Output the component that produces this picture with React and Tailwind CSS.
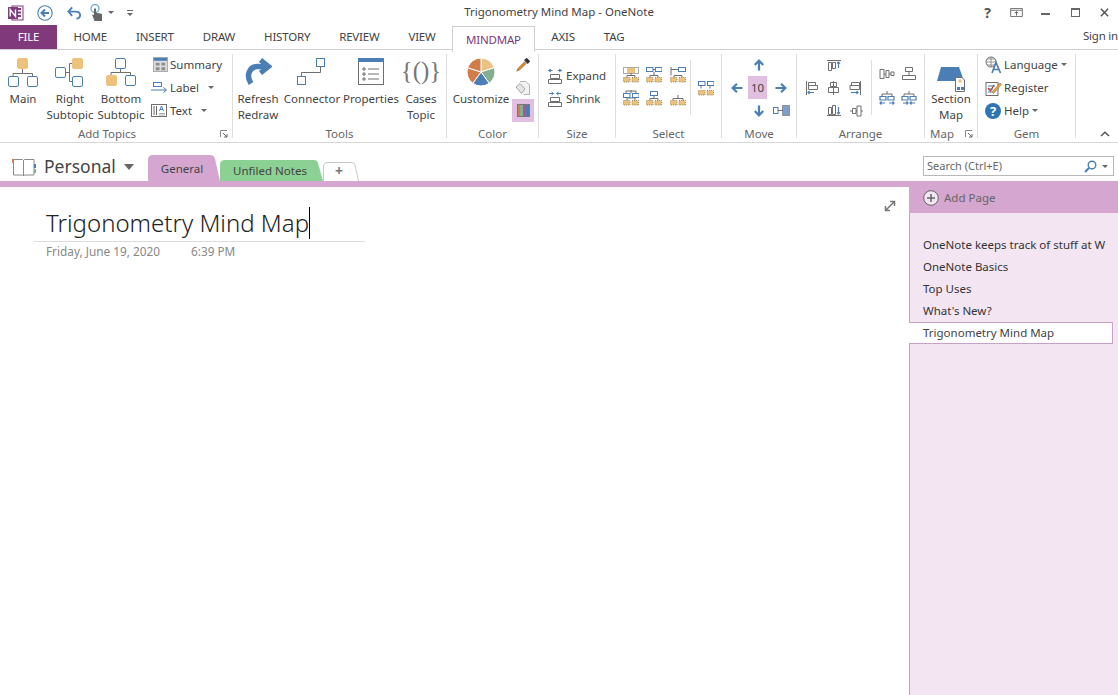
import React from "react";

const blue = "#4a7eb5";
const orange = "#ecc27c";
const gray = "#6f6f6f";

function polar(r, deg) {
  const a = (deg * Math.PI) / 180;
  return `${(15 + r * Math.cos(a)).toFixed(2)} ${(15 + r * Math.sin(a)).toFixed(2)}`;
}

function Pie() {
  const slices = [
    [-90, -18, "#e9c384"],
    [-18, 54, "#86ae92"],
    [54, 126, "#4a7eb5"],
    [126, 198, "#d27d48"],
    [198, 270, "#d27d48"],
  ];
  return (
    <svg width="30" height="30" viewBox="0 0 30 30">
      {slices.map((s) => (
        <path
          key={s[0]}
          d={`M15 15 L${polar(14, s[0])} A14 14 0 0 1 ${polar(14, s[1])} Z`}
          fill={s[2]}
          stroke="#fff"
          strokeWidth="1"
        />
      ))}
    </svg>
  );
}

// big topic icons: o = filled orange, b = blue outline
function TopicIcon({ boxes, line }) {
  return (
    <svg width="32" height="30" viewBox="0 0 32 30">
      <path d={line} fill="none" stroke={gray} strokeWidth="1" />
      {boxes.map((b, i) => (
        <rect
          key={i}
          x={b[0] + 0.5}
          y={b[1] + 0.5}
          width="10"
          height="10"
          rx="1.5"
          fill={b[2] === "o" ? orange : "#fff"}
          stroke={b[2] === "o" ? orange : blue}
          strokeWidth="1"
        />
      ))}
    </svg>
  );
}

// small org chart icons in the Select group
function OrgIcon({ top, line, bottom, frame }) {
  return (
    <svg width="16" height="16" viewBox="0 0 16 16">
      {frame && <rect x="0.5" y="0.5" width="15" height="6" fill="none" stroke="#555" strokeWidth="1" strokeDasharray="1 1" />}
      <path d={line} fill="none" stroke={gray} strokeWidth="1" />
      {top.map((b, i) => (
        <rect key={i} x={b[0] + 0.5} y={b[1] + 0.5} width={b[2]} height="4" fill={b[3] ? orange : "#fff"} stroke={b[3] ? orange : blue} strokeWidth="1" />
      ))}
      {bottom.map((x, i) => (
        <rect key={i} x={x + 0.5} y="10.5" width="6.5" height="4.5" fill={orange} stroke="#a08c5c" strokeWidth="1" strokeDasharray="1 1" />
      ))}
    </svg>
  );
}

function Arrow({ dir }) {
  const rot = { up: 0, right: 90, down: 180, left: 270 }[dir];
  return (
    <svg width="12" height="12" viewBox="0 0 12 12" style={{ transform: `rotate(${rot}deg)` }}>
      <path d="M6 11.5V2M1.8 6 6 1.6 10.2 6" fill="none" stroke={blue} strokeWidth="2.2" />
    </svg>
  );
}

function ArrangeIcon({ d, blueD }) {
  return (
    <svg width="16" height="16" viewBox="0 0 16 16">
      <path d={d} fill="none" stroke={gray} strokeWidth="1" />
      {blueD && <path d={blueD} fill="none" stroke={blue} strokeWidth="1.2" />}
    </svg>
  );
}

function Launcher() {
  return (
    <svg width="8" height="8" viewBox="0 0 8 8" className="absolute right-[4px] top-[4px]">
      <path d="M0.5 7V0.5H7" fill="none" stroke="#8a8a8a" />
      <path d="M3 3 7 7M7 4V7H4" fill="none" stroke="#666" />
    </svg>
  );
}

function Caret({ className }) {
  return <span className={`inline-block w-0 h-0 border-x-[3px] border-x-transparent border-t-[3px] border-t-[#666] ${className || ""}`} />;
}

function Sep() {
  return <div className="w-px h-[84px] mt-[4px] bg-[#dedede] shrink-0" />;
}

function Group({ width, label, launcher, children }) {
  return (
    <div className={`${width} shrink-0 flex flex-col h-full relative`}>
      <div className="flex-1 flex min-h-0">{children}</div>
      <div className={`h-[16px] leading-[16px] text-center text-[#666] relative ${launcher ? "pr-[18px]" : ""}`}>
        {label}
        {launcher && <Launcher />}
      </div>
    </div>
  );
}

function Large({ width, icon, lines }) {
  return (
    <div className={`${width} shrink-0 flex flex-col items-center pt-[7px]`}>
      <div className="h-[34px] flex items-start justify-center">{icon}</div>
      {lines.map((l) => (
        <div key={l} className="leading-[16px] whitespace-nowrap">{l}</div>
      ))}
    </div>
  );
}

function Small({ icon, label, caret }) {
  return (
    <div className="h-[23px] flex items-center whitespace-nowrap">
      {icon}
      <span>{label}</span>
      {caret}
    </div>
  );
}

function Cell({ children }) {
  return <div className="w-[22px] h-[23px] flex items-center justify-center">{children}</div>;
}

function Tab({ label, active }) {
  if (active) {
    return (
      <div className="h-[26px] -mb-px ml-[2px] mr-[2px] px-[13px] flex items-center border border-b-0 border-[#d0d0d0] bg-white text-[#80397b] mt-px">
        {label}
      </div>
    );
  }
  return <div className="px-[14.5px] flex items-center">{label}</div>;
}

function SectionTab({ w, h, fill, stroke, d, children, className }) {
  return (
    <div className={`relative ${w} ${h} flex items-center justify-center ${className || ""}`}>
      <svg className="absolute inset-0" width="100%" height="100%" preserveAspectRatio="none" viewBox={`0 0 ${parseInt(w.slice(3))} ${parseInt(h.slice(3))}`}>
        <path d={d} fill={fill} stroke={stroke} />
      </svg>
      <span className="relative">{children}</span>
    </div>
  );
}

export default function App() {
  const pages = ["OneNote keeps track of stuff at W", "OneNote Basics", "Top Uses", "What's New?"];
  return (
    <div className="w-[1118px] h-[695px] overflow-hidden bg-white flex flex-col text-[11.5px] text-[#444] font-['Noto_Sans',sans-serif]">
      {/* title bar */}
      <div className="h-[25px] shrink-0 flex items-center relative">
        <div className="flex items-center pl-[8px] gap-[13px]">
          <svg width="16" height="16" viewBox="0 0 16 16">
            <rect x="4" y="1" width="11" height="14" fill="#fff" stroke="#80397b" />
            <path d="M10 3h3v2h-3zM10 6.5h3v2h-3zM10 10h3v2h-3z" fill="#80397b" />
            <rect x="0" y="2" width="10" height="12" fill="#80397b" />
            <path d="M2.2 11.5V4.5L7.5 11.5V4.5" fill="none" stroke="#fff" strokeWidth="1.4" />
          </svg>
          <svg width="16" height="16" viewBox="0 0 16 16">
            <circle cx="8" cy="8" r="7.2" fill="none" stroke={blue} strokeWidth="1.1" />
            <path d="M12 8H5M8 4.5 4.5 8 8 11.5" fill="none" stroke={blue} strokeWidth="2" />
          </svg>
          <div className="flex items-center ml-px">
            <svg width="15" height="14" viewBox="0 0 16 14" className="mr-[8px]">
              <path d="M3 5.5H9.5C12.5 5.5 14 7.5 14 9.5S12 13 10 13" fill="none" stroke={blue} strokeWidth="2" />
              <path d="M5.5 1 1.5 5.5 5.5 10" fill="none" stroke={blue} strokeWidth="2" />
            </svg>
            <svg width="14" height="18" viewBox="0 0 14 18" className="mr-[4px]">
              <circle cx="5" cy="4.5" r="4" fill="none" stroke="#6fb3d2" strokeWidth="1.4" />
              <path d="M4 4.5V11L2 10.5 4.5 17H12V10L6 8.5V4.5Z" fill="#666" />
            </svg>
            <Caret className="border-t-[#444]" />
            <div className="ml-[13px] flex flex-col items-center gap-[2px]">
              <div className="w-[6px] h-px bg-[#666]" />
              <Caret className="border-t-[#666]" />
            </div>
          </div>
        </div>
        <div className="absolute inset-x-0 top-[4px] text-center leading-[16px] pointer-events-none">Trigonometry Mind Map - OneNote</div>
        <div className="ml-auto flex items-center text-[#555]">
          <span className="w-[7px] flex justify-center font-bold text-[14px] leading-none mr-[19px]">?</span>
          <svg width="13" height="9" viewBox="0 0 14 10" className="mr-[18px]">
            <path d="M.5.5h13v9H.5zM.5 2.5h13" fill="none" stroke="#666" />
            <path d="M7 8.5V4M5 6 7 4 9 6" fill="none" stroke="#555" />
          </svg>
          <div className="w-[9px] h-[2px] bg-[#666] mr-[21px] mt-[3px]" />
          <div className="w-[9px] h-[9px] border border-t-2 border-[#666] mr-[20px]" />
          <svg width="9" height="9" viewBox="0 0 11 11" className="mr-[9px]">
            <path d="M1 1 10 10M10 1 1 10" stroke="#555" strokeWidth="1.8" />
          </svg>
        </div>
      </div>

      {/* tabs */}
      <div className="h-[25px] shrink-0 flex items-stretch border-b border-[#d0d0d0] tracking-[-0.2px]">
        <div className="w-[57px] mr-[2px] bg-[#80397b] text-white flex items-center justify-center">FILE</div>
        <Tab label="HOME" />
        <Tab label="INSERT" />
        <Tab label="DRAW" />
        <Tab label="HISTORY" />
        <Tab label="REVIEW" />
        <Tab label="VIEW" />
        <Tab label="MINDMAP" active />
        <Tab label="AXIS" />
        <Tab label="TAG" />
        <div className="ml-auto flex items-center whitespace-nowrap pb-[3px]">Sign in</div>
      </div>

      {/* ribbon */}
      <div className="h-[93px] shrink-0 flex border-b border-[#d6d6d6]">
        <Group width="w-[232px]" label="Add Topics" launcher>
          <Large width="w-[46px]" lines={["Main"]} icon={<TopicIcon boxes={[[10, 1, "o"], [1, 19, "b"], [20, 19, "b"]]} line="M15.5 12V16M6 19V16.5H25.5V19" />} />
          <Large width="w-[48px]" lines={["Right", "Subtopic"]} icon={<TopicIcon boxes={[[1, 10, "b"], [18, 1, "o"], [18, 19, "b"]]} line="M12 15.5H15M18 6.5H15.5V24.5H18" />} />
          <Large width="w-[54px]" lines={["Bottom", "Subtopic"]} icon={<TopicIcon boxes={[[10, 1, "b"], [1, 18, "o"], [20, 18, "b"]]} line="M15.5 12V15.5M6 18V15.5H25.5V18" />} />
          <div className="pl-[3px] pt-[3px] flex flex-col">
            <Small label="Summary" icon={
              <svg width="15" height="15" viewBox="0 0 16 16" className="ml-[2px] mr-[2px]">
                <rect x=".5" y=".5" width="15" height="15" fill="#dcdcdc" stroke="#a8a8a8" />
                <rect x="1" y="1" width="14" height="3" fill={blue} />
                <path d="M3 6h4v3H3zM9 6h4v3H9zM3 11h4v3H3zM9 11h4v3H9z" fill="#8c8c8c" />
              </svg>} />
            <Small label="Label" caret={<Caret className="ml-[9px]" />} icon={
              <svg width="17" height="12" viewBox="0 0 17 12" className="mr-[2px]">
                <rect x="2.5" y=".5" width="8" height="4" fill="#fff" stroke={blue} />
                <path d="M0 8H15M12.5 5.5 15.5 8 12.5 10.5" fill="none" stroke={blue} />
              </svg>} />
            <Small label="Text" caret={<Caret className="ml-[9px]" />} icon={
              <svg width="16" height="13" viewBox="0 0 16 13" className="mr-[3px]">
                <rect x=".5" y=".5" width="15" height="12" fill="#fff" stroke={gray} />
                <path d="M3 2v9M5.5 2v9" stroke={gray} />
                <path d="M8.5 7 10.5 2 12.5 7M9.2 5.5h2.6" fill="none" stroke={blue} />
                <path d="M8 9.5h6M8 11h6" stroke="#aaa" />
              </svg>} />
          </div>
        </Group>
        <Sep />
        <Group width="w-[213px]" label="Tools">
          <Large width="w-[50px]" lines={["Refresh", "Redraw"]} icon={
            <svg width="27" height="27" viewBox="0 0 27 27" className="mt-[1px]">
              <path d="M6 25.5C1 18 4 9 12 8.5H22" fill="none" stroke={blue} strokeWidth="5.5" />
              <path d="M15.5 2 23.5 8.5 15.5 15" fill="none" stroke={blue} strokeWidth="5" />
            </svg>} />
          <Large width="w-[58px]" lines={["Connector"]} icon={
            <svg width="30" height="28" viewBox="0 0 30 28" className="mt-[1px]">
              <rect x=".5" y="18.5" width="8" height="8" fill="#fff" stroke={blue} />
              <rect x="19.5" y=".5" width="8" height="8" fill="#fff" stroke={blue} />
              <path d="M4.5 18.5V14.5H23.5V8.5" fill="none" stroke={gray} />
            </svg>} />
          <Large width="w-[60px]" lines={["Properties"]} icon={
            <svg width="26" height="28" viewBox="0 0 26 28" className="mt-[1px]">
              <rect x=".5" y=".5" width="25" height="26" fill="#fff" stroke={gray} />
              <rect x="0" y="0" width="26" height="4" fill={blue} />
              <path d="M5 10h2v2H5zM5 15h2v2H5zM5 20h2v2H5z" fill="none" stroke={gray} />
              <path d="M10 11h11M10 16h11M10 21h11" stroke={gray} />
            </svg>} />
          <Large width="w-[40px]" lines={["Cases", "Topic"]} icon={
            <span className="font-['Liberation_Serif',serif] text-[25px] leading-[28px] text-[#777] whitespace-nowrap">{"{()}"}</span>} />
        </Group>
        <Sep />
        <Group width="w-[91px]" label="Color">
          <Large width="w-[68px]" lines={["Customize"]} icon={<Pie />} />
          <div className="-ml-[3px] pt-[3px] w-[22px] flex flex-col">
            <Cell>
              <svg width="15" height="15" viewBox="0 0 14 14">
                <path d="M.8 13.2 2 10.5 8 4.5 9.5 6 3.5 12Z" fill="#e08a3c" stroke="#8a5a2a" strokeWidth=".6" />
                <path d="M7.5 3 10 .8 13.2 4 11 6.5Z" fill="#333" />
              </svg>
            </Cell>
            <Cell>
              <svg width="16" height="16" viewBox="0 0 16 16" opacity=".75">
                <path d="M5 1.5h6l3.5 3.5v9.5h-6" fill="#eee" stroke="#999" />
                <path d="M1 7 5 3.5 10 9 6.5 13.5Z" fill="#ddd" stroke="#888" />
              </svg>
            </Cell>
            <div className="w-[22px] h-[23px] bg-[#e0bfe0] flex items-center justify-center">
              <div className="w-[13px] h-[13px] border border-[#777] flex">
                <div className="flex-1 bg-[#d27d48]" />
                <div className="flex-1 bg-[#86ae92]" />
                <div className="flex-1 bg-[#a9559a]" />
                <div className="flex-1 bg-[#4a7eb5]" />
              </div>
            </div>
          </div>
        </Group>
        <Sep />
        <Group width="w-[76px]" label="Size">
          <div className="pl-[9px] pt-[14px] flex flex-col">
            <Small label="Expand" icon={
              <svg width="14" height="16" viewBox="0 0 14 16" className="mr-[4px]">
                <path d="M.5 2.5h4M3 1 .5 2.5 3 4M13.5 2.5h-4M11 1l2.5 1.5L11 4" fill="none" stroke={blue} />
                <path d="M2.5 6.5h9v4h-9zM.5 11.5h13v4H.5z" fill="none" stroke={gray} />
              </svg>} />
            <Small label="Shrink" icon={
              <svg width="14" height="16" viewBox="0 0 14 16" className="mr-[4px]">
                <path d="M1 2.5h4M3.5 1 5.5 2.5 3.5 4M13 2.5H9M10.5 1 8.5 2.5 10.5 4" fill="none" stroke={blue} />
                <path d="M2.5 6.5h9v4h-9zM.5 11.5h13v4H.5z" fill="none" stroke={gray} />
              </svg>} />
          </div>
        </Group>
        <Sep />
        <Group width="w-[105px]" label="Select">
          <div className="pl-[4px] pt-[13px] w-[74px] grid grid-cols-3 content-start">
            <Cell><OrgIcon frame top={[[4, 1, 7, 1]]} line="M8 6V8.5M4 10.5V8.5H12V10.5" bottom={[0, 8.5]} /></Cell>
            <Cell><OrgIcon top={[[0, 0, 6.5], [9, 0, 6.5]]} line="M7 2.5H9M8 5V8.5M4 10.5V8.5H12V10.5" bottom={[0, 8.5]} /></Cell>
            <Cell><OrgIcon top={[[8, 0, 7]]} line="M1 0V8.5M1 2.5H8M4 10.5V8.5H12V10.5" bottom={[0, 8.5]} /></Cell>
            <Cell><OrgIcon top={[[0, 3, 6.5], [9, 3, 6.5]]} line="M8 0V3M3 3V1H13V3M4 10.5V8H12V10.5" bottom={[0, 8.5]} /></Cell>
            <Cell><OrgIcon top={[[4, 1, 7]]} line="M8 6V8.5M4 10.5V8.5H12V10.5" bottom={[0, 8.5]} /></Cell>
            <Cell><OrgIcon top={[]} line="M8 5V8.5M3 10.5V8.5H13V10.5" bottom={[0, 8.5]} /></Cell>
          </div>
          <div className="w-px h-[55px] mt-[10px] bg-[#dedede]" />
          <div className="pl-[7px] flex items-center h-[76px]">
            <OrgIcon top={[[0, 1, 6.5], [9, 1, 6.5]]} line="M3 6V8.5M12 6V8.5" bottom={[0, 8.5]} />
          </div>
        </Group>
        <Sep />
        <Group width="w-[74px]" label="Move">
          <div className="pl-[4px] pt-[3px] grid grid-cols-3 content-start">
            <Cell />
            <Cell><Arrow dir="up" /></Cell>
            <Cell />
            <Cell><Arrow dir="left" /></Cell>
            <div className="w-[22px] h-[23px] flex justify-start"><div className="w-[19px] bg-[#e0bfe0] text-center leading-[23px]">10</div></div>
            <Cell><Arrow dir="right" /></Cell>
            <Cell />
            <Cell><Arrow dir="down" /></Cell>
            <Cell>
              <svg width="17" height="11" viewBox="0 0 17 11">
                <rect x=".5" y="2.5" width="4.5" height="6" fill="#fff" stroke={blue} />
                <path d="M5 5.5h5" stroke={gray} />
                <rect x="9.5" y=".5" width="7" height="10" fill="#7f9fcb" stroke="#555" strokeDasharray="1 1" />
              </svg>
            </Cell>
          </div>
        </Group>
        <Sep />
        <Group width="w-[127px]" label="Arrange">
          <div className="pl-[4px] pt-[3px] w-[70px] grid grid-cols-3 content-start shrink-0">
            <Cell />
            <Cell><ArrangeIcon d="M1 3.5H15M2.5 5.5h3v8h-3zM6.5 5.5h3v6h-3z" blueD="M12.5 11V5M11 6.5 12.5 5 14 6.5" /></Cell>
            <Cell />
            <Cell><ArrangeIcon d="M2.5 1V15M4.5 2.5h7v3h-7zM4.5 5.5h9v4h-9z" blueD="M10 12.5H4M5.5 11 4 12.5 5.5 14" /></Cell>
            <Cell><ArrangeIcon d="M7.5 1V15M4.5 2.5h6v4h-6zM2.5 7.5h10v5h-10z" /></Cell>
            <Cell><ArrangeIcon d="M12.5 1V15M3.5 2.5h8v3h-8zM2 5.5h9.5v4H2z" blueD="M3 12.5h7M8.5 11 10 12.5 8.5 14" /></Cell>
            <Cell />
            <Cell><ArrangeIcon d="M1 12.5H15M2.5 4.5h3v7h-3zM6.5 2.5h3v9h-3z" blueD="M12.5 4v7M11 9.5 12.5 11 14 9.5" /></Cell>
            <Cell><ArrangeIcon d="M2 8H4.5M4.5 5.5h3.5v5H4.5zM9 3h4v10H9zM8 8H9M13 8h2" /></Cell>
          </div>
          <div className="w-px h-[55px] mt-[10px] ml-[4px] bg-[#dedede]" />
          <div className="pl-[4px] pt-[12px] grid grid-cols-2 content-start">
            <div className="w-[22px] h-[24px] flex items-center justify-center"><ArrangeIcon d="M1 3.5h4v9H1zM7 4.5h3v7H7zM12 6h3v3.5h-3zM5 8h2M10 8h2" /></div>
            <div className="w-[22px] h-[24px] flex items-center justify-center"><ArrangeIcon d="M4.5 1.5h7v4h-7zM1.5 9.5h13v4h-13zM8 5.5v4" /></div>
            <div className="w-[22px] h-[24px] flex items-center justify-center"><ArrangeIcon d="M8 1V4M3 6V4H13V6" blueD="M1 6.5h6v3.5H1zM9 6.5h6v3.5H9zM1 13h5M2.5 11.5 1 13l1.5 1.5M10 13h5M13.5 11.5 15 13l-1.5 1.5" /></div>
            <div className="w-[22px] h-[24px] flex items-center justify-center"><ArrangeIcon d="M8 1V4M3 6V4H13V6" blueD="M1 6.5h6v3.5H1zM9 6.5h6v3.5H9zM2 13h5M5.5 11.5 7 13l-1.5 1.5M9 13h5M10.5 11.5 9 13l1.5 1.5" /></div>
          </div>
        </Group>
        <Sep />
        <Group width="w-[52px]" label="Map" launcher>
          <Large width="w-[52px]" lines={["Section", "Map"]} icon={
            <svg width="30" height="26" viewBox="0 0 30 26" className="mt-[9px] -mb-[1px]">
              <path d="M1 15 5 1H23L28 15Z" fill={blue} />
              <path d="M19.5 11.5H26L28.5 14V25.5H19.5Z" fill="#fff" stroke={gray} />
              <rect x="22.5" y="13.5" width="3" height="3" fill={orange} />
              <path d="M21 21h3v3h-3zM25 21h3v3h-3z" fill={blue} />
            </svg>} />
        </Group>
        <Sep />
        <Group width="w-[97px]" label="Gem">
          <div className="pl-[7px] pt-[3px] flex flex-col">
            <Small label="Language" caret={<Caret className="ml-[3px]" />} icon={
              <svg width="17" height="18" viewBox="0 0 17 18" className="mr-[2px]">
                <circle cx="6" cy="6" r="5" fill="none" stroke={gray} />
                <path d="M1 6h10M6 1v10M2 3h8M2 9h8" stroke={gray} strokeWidth=".7" />
                <path d="M7 17 11 6.5 15.5 17M8.5 13.5h5.5" fill="none" stroke={blue} strokeWidth="1.7" />
              </svg>} />
            <Small label="Register" icon={
              <svg width="17" height="16" viewBox="0 0 17 16" className="mr-[2px]">
                <rect x="1" y="2.5" width="12" height="13" fill="#fff" stroke={gray} />
                <path d="M3 6h7M3 9h5M3 12h4" stroke={blue} />
                <path d="M3 8 5.5 11 9 5" fill="none" stroke="#c0392b" strokeWidth="1.2" />
                <path d="M7 12 15 3l1.5 1.5-8 9Z" fill="#e3a23b" stroke="#8a6a2a" strokeWidth=".5" />
              </svg>} />
            <Small label="Help" caret={<Caret className="ml-[3px]" />} icon={
              <div className="w-[16px] h-[16px] mr-[3px] rounded-full bg-[#2e75b5] text-white text-[13px] leading-[16px] text-center font-bold">?</div>} />
          </div>
        </Group>
        <Sep />
        <div className="flex-1 flex items-end justify-end pr-[8px] pb-[5px]">
          <svg width="10" height="6" viewBox="0 0 10 6">
            <path d="M1 5 5 1.2 9 5" fill="none" stroke="#555" strokeWidth="1.5" />
          </svg>
        </div>
      </div>

      {/* notebook row */}
      <div className="h-[38px] shrink-0 flex items-end">
        <div className="w-[148px] h-full flex items-center pl-[12px] pt-[10px] shrink-0">
          <svg width="24" height="19" viewBox="0 0 24 19" className="mr-[8px]">
            <path d="M1.5 1.5H10.5L11.5 2.5L12.5 1.5H22V17H12.5L11.5 18L10.5 17H1.5Z" fill="#fff" stroke="#8a8a8a" />
            <path d="M11.5 2.5V18" stroke="#8a8a8a" />
            <rect x="0" y="1" width="2" height="4" fill="#d27d48" />
            <rect x="22" y="6" width="2" height="4" fill={blue} />
            <rect x="22" y="11" width="2" height="4" fill="#86ae92" />
          </svg>
          <span className="text-[17.5px] leading-none text-[#444]">Personal</span>
          <span className="ml-[8px] w-0 h-0 border-x-[5px] border-x-transparent border-t-[6px] border-t-[#666]" />
        </div>
        <SectionTab w="w-[72px]" h="h-[26px]" fill="#d5a6d0" d="M0 26V5Q0 0 5 0H62Q66 0 67 4L72 26Z" className="pt-[1px] pr-[4px]">General</SectionTab>
        <SectionTab w="w-[103px]" h="h-[21px]" fill="#8bd194" d="M0 21V5Q0 0 5 0H94Q97 0 98 3L103 21Z" className="pt-px pr-[3px]">Unfiled Notes</SectionTab>
        <SectionTab w="w-[36px]" h="h-[19px]" fill="#fff" stroke="#c8c8c8" d="M.5 19V5Q.5 .5 5 .5H29Q31 .5 32 3L35.5 19" className="pr-[4px]">
          <span className="text-[14px] font-bold text-[#777] leading-none">+</span>
        </SectionTab>
        <div className="ml-auto mr-[4px] mb-[5px] w-[191px] h-[20px] border border-[#b8b8b8] flex items-center pl-[3px] pr-[5px] text-[#666] text-[11px]">
          <span>Search (Ctrl+E)</span>
          <svg width="13" height="13" viewBox="0 0 13 13" className="ml-auto mr-[5px]">
            <circle cx="8" cy="5" r="3.8" fill="none" stroke={blue} strokeWidth="1.4" />
            <path d="M5 8 1 12" stroke={blue} strokeWidth="2" />
          </svg>
          <Caret className="border-t-[#444]" />
        </div>
      </div>
      <div className="h-[6px] shrink-0 bg-[#d5a6d0]" />

      {/* page + page list */}
      <div className="flex-1 flex min-h-0">
        <div className="flex-1 pl-[34px] pt-[18px] relative">
          <svg width="12" height="12" viewBox="0 0 12 12" className="absolute right-[13px] top-[13px]">
            <path d="M2 10 10 2M6 1.5H10.5V6M1.5 6V10.5H6" fill="none" stroke="#777" strokeWidth="1.5" />
          </svg>
          <div className="w-[331px] h-[37px] border-b border-[#dcdcdc] pl-[12px] pb-px text-[24px] leading-[35px] font-light text-[#222] flex items-center">
            <span className="whitespace-nowrap">Trigonometry Mind Map</span>
            <span className="w-px h-[32px] bg-black" />
          </div>
          <div className="pl-[12px] pt-px text-[11.8px] text-[#888] flex leading-[17px]">
            <span className="w-[145px]">Friday, June 19, 2020</span>
            <span>6:39 PM</span>
          </div>
        </div>
        <div className="w-[209px] shrink-0 bg-[#f3e5f2] border-l border-[#c9a0c9] flex flex-col">
          <div className="h-[26px] bg-[#d5a6d0] -ml-px pl-[14px] pb-[4px] flex items-center text-[#666]">
            <svg width="16" height="16" viewBox="0 0 16 16" className="mr-[5px]">
              <circle cx="8" cy="8" r="7.3" fill="#f3e5f2" stroke="#666" />
              <path d="M8 4v8M4 8h8" stroke="#666" strokeWidth="1.5" />
            </svg>
            Add Page
          </div>
          <div className="pt-[21px]">
            {pages.map((p) => (
              <div key={p} className="h-[22px] leading-[22px] pl-[13px] text-[#333] whitespace-nowrap">{p}</div>
            ))}
            <div className="h-[22px] w-[204px] -ml-px bg-white border border-l-0 border-[#c9a0c9] leading-[20px] pl-[14px] whitespace-nowrap">Trigonometry Mind Map</div>
          </div>
        </div>
      </div>
    </div>
  );
}
